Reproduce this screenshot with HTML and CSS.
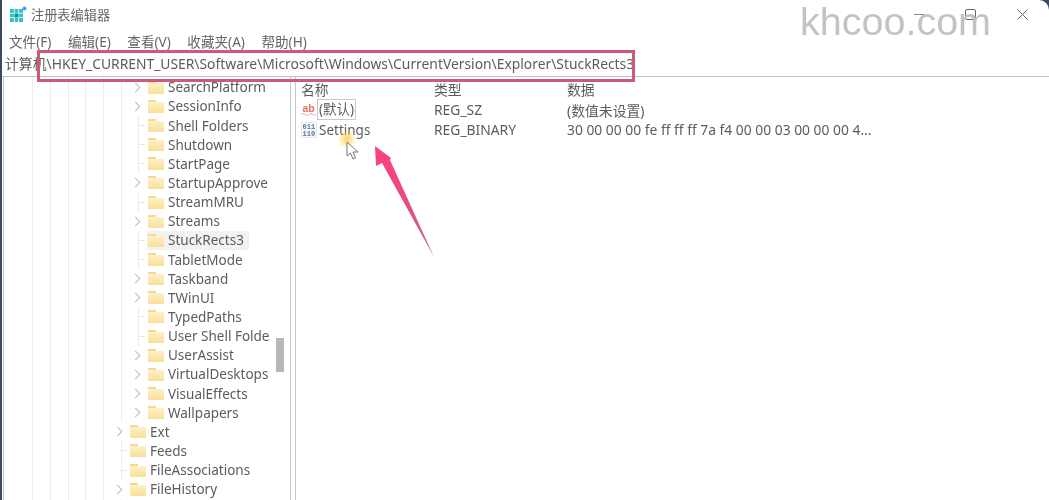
FILE: index.html
```html
<!DOCTYPE html>
<html lang="zh-CN">
<head>
    <meta charset="UTF-8">
    <title>注册表编辑器</title>
    <link rel="stylesheet" href="styles.css">
</head>
<body>
    <div class="window">
        <!-- Title bar -->
        <div class="titlebar">
            <svg class="app-icon" width="17" height="16" viewBox="0 0 17 16">
                <rect x="0" y="3" width="13" height="13" fill="#35c0c4"/>
                <path d="M0 7.3h13M0 11.6h13M4.3 3v13M8.6 3v13" stroke="#d8f4f4" stroke-width="1"/>
                <rect x="4.5" y="7.5" width="4" height="4" fill="#1f8fb0"/>
                <circle cx="14.5" cy="2.5" r="2" fill="#3f9fd8"/>
            </svg>
            <span class="app-title">注册表编辑器</span>
            <div class="controls">
                <span class="ctl-min"></span>
                <span class="ctl-max"></span>
                <svg class="ctl-close" width="11" height="11" viewBox="0 0 11 11">
                    <path d="M0.5 0.5l10 10M10.5 0.5l-10 10" stroke="#666" stroke-width="1" fill="none"/>
                </svg>
            </div>
        </div>

        <!-- Menu -->
        <div class="menubar">
            <span>文件(F)</span>
            <span>编辑(E)</span>
            <span>查看(V)</span>
            <span>收藏夹(A)</span>
            <span>帮助(H)</span>
        </div>

        <!-- Address -->
        <div class="addressbar">计算机\HKEY_CURRENT_USER\Software\Microsoft\Windows\CurrentVersion\Explorer\StuckRects3</div>

        <div class="panes">
            <!-- Key tree -->
            <div class="tree-pane">
                <div class="tree">
                    <div class="group">
                        <div class="row"><i class="chev"></i><i class="folder"></i><span>SearchPlatform</span></div>
                        <div class="row"><i class="chev"></i><i class="folder"></i><span>SessionInfo</span></div>
                        <div class="row"><i class="dash"></i><i class="folder"></i><span>Shell Folders</span></div>
                        <div class="row"><i class="dash"></i><i class="folder"></i><span>Shutdown</span></div>
                        <div class="row"><i class="dash"></i><i class="folder"></i><span>StartPage</span></div>
                        <div class="row"><i class="chev"></i><i class="folder"></i><span>StartupApprove</span></div>
                        <div class="row"><i class="dash"></i><i class="folder"></i><span>StreamMRU</span></div>
                        <div class="row"><i class="chev"></i><i class="folder"></i><span>Streams</span></div>
                        <div class="row selected"><i class="dash"></i><i class="folder"></i><span>StuckRects3</span></div>
                        <div class="row"><i class="dash"></i><i class="folder"></i><span>TabletMode</span></div>
                        <div class="row"><i class="chev"></i><i class="folder"></i><span>Taskband</span></div>
                        <div class="row"><i class="chev"></i><i class="folder"></i><span>TWinUI</span></div>
                        <div class="row"><i class="dash"></i><i class="folder"></i><span>TypedPaths</span></div>
                        <div class="row"><i class="dash"></i><i class="folder"></i><span>User Shell Folde</span></div>
                        <div class="row"><i class="chev"></i><i class="folder"></i><span>UserAssist</span></div>
                        <div class="row"><i class="chev"></i><i class="folder"></i><span>VirtualDesktops</span></div>
                        <div class="row"><i class="chev"></i><i class="folder"></i><span>VisualEffects</span></div>
                        <div class="row"><i class="chev"></i><i class="folder"></i><span>Wallpapers</span></div>
                    </div>
                    <div class="group outer">
                        <div class="row"><i class="chev"></i><i class="folder"></i><span>Ext</span></div>
                        <div class="row"><i class="dash"></i><i class="folder"></i><span>Feeds</span></div>
                        <div class="row"><i class="dash"></i><i class="folder"></i><span>FileAssociations</span></div>
                        <div class="row"><i class="chev"></i><i class="folder"></i><span>FileHistory</span></div>
                    </div>
                </div>
                <div class="scrollbar"><div class="thumb"></div></div>
            </div>

            <!-- Values -->
            <div class="list-pane">
                <div class="list-row list-head">
                    <span>名称</span><span>类型</span><span>数据</span>
                </div>
                <div class="list-row">
                    <span class="name">
                        <svg class="val-icon" width="16" height="16" viewBox="0 0 16 16">
                            <text x="1.5" y="9.5" class="ab-text">ab</text>
                            <path d="M0 12.5q2-2 4 0t4 0 4 0 3-1" stroke="#eeb5ac" fill="none"/>
                        </svg>
                        <span class="focused">(默认)</span>
                    </span>
                    <span>REG_SZ</span><span>(数值未设置)</span>
                </div>
                <div class="list-row">
                    <span class="name">
                        <svg class="val-icon" width="16" height="16" viewBox="0 0 16 16">
                            <rect x="0.5" y="0.5" width="15" height="15" fill="#f7f9fc" stroke="#e3e8ef"/>
                            <text x="1.5" y="7" class="bin-text">011</text>
                            <text x="1.5" y="14" class="bin-text">110</text>
                        </svg>
                        <span class="plain">Settings</span>
                    </span>
                    <span>REG_BINARY</span><span>30 00 00 00 fe ff ff ff 7a f4 00 00 03 00 00 00 4...</span>
                </div>
            </div>
        </div>
    </div>

    <!-- Video overlays -->
    <div class="watermark">khcoo.com</div>
    <div class="callout"></div>
    <div class="glow"></div>
    <svg class="cursor" width="16" height="20" viewBox="0 0 16 20">
        <path d="M1 1v14l3.5-3 2.5 6 2.5-1-2.5-6h5z" fill="#fff" stroke="#777" stroke-width="1"/>
    </svg>
    <svg class="arrow" width="64" height="116" viewBox="0 0 64 116">
        <defs>
            <linearGradient id="arrowFill" x1="0" y1="0" x2="0" y2="1">
                <stop offset="0.3" stop-color="#f5457c"/>
                <stop offset="1" stop-color="#c06a8a"/>
            </linearGradient>
        </defs>
        <path d="M2 1L18 13L17 15L61 112L9 18L3 21Z" fill="url(#arrowFill)"/>
    </svg>
</body>
</html>
```

FILE: styles.css
```css
html, body {
    margin: 0;
    height: 100%;
    overflow: hidden;
}

body {
    background: #3b4a5c;
    font-family: "Noto Sans", "Noto Sans CJK SC", sans-serif;
    color: #5c5c5c;
    font-size: 13.85px;
}

.window {
    margin-left: 2px;
    height: 500px;
    background: #fff;
    border-top-right-radius: 10px;
    display: flex;
    flex-direction: column;
    overflow: hidden;
    filter: blur(0.5px);
}

/* Title bar */
.titlebar {
    height: 28px;
    padding-bottom: 2px;
    display: flex;
    align-items: center;
    padding-left: 8px;
    flex: none;
}

.app-icon {
    margin-right: 4px;
}

.app-title {
    font-size: 13.2px;
    color: #666;
}

.controls {
    margin-left: auto;
    display: flex;
    align-items: center;
    gap: 41px;
    padding-right: 21px;
}

.ctl-min {
    width: 10px;
    border-top: 1px solid #888;
}

.ctl-max {
    width: 9px;
    height: 9px;
    border: 1px solid #666;
    border-radius: 2px;
}

/* Menu */
.menubar {
    height: 22px;
    display: flex;
    align-items: center;
    gap: 16.5px;
    padding-left: 7px;
    flex: none;
    color: #666;
    font-size: 13.6px;
}

.addressbar {
    height: 24px;
    line-height: 24px;
    padding-left: 3px;
    flex: none;
    border-bottom: 1px solid #c4c4c4;
    white-space: nowrap;
}

/* Panes */
.panes {
    flex: 1;
    min-height: 0;
    display: flex;
    gap: 4px;
    padding-left: 1px;
}

.tree-pane {
    width: 286px;
    border-left: 1px solid #c9c9c9;
    border-right: 1px solid #c9c9c9;
    display: flex;
    flex: none;
}

/* level guides of the tree, one per depth */
.tree {
    --guide: linear-gradient(#ececec, #ececec);
    width: 267px;
    flex: none;
    padding-top: 0.7px;
    overflow: hidden;
    background:
        var(--guide) 28px 0 / 1px 100% no-repeat,
        var(--guide) 46px 0 / 1px 100% no-repeat,
        var(--guide) 64px 0 / 1px 100% no-repeat,
        var(--guide) 81px 0 / 1px 100% no-repeat,
        var(--guide) 99px 0 / 1px 100% no-repeat,
        var(--guide) 117px 0 / 1px 100% no-repeat;
    white-space: nowrap;
    font-size: 13.5px;
}

.group {
    padding-left: 127px;
    background: linear-gradient(#ececec, #ececec) 134px 0 / 1px 100% no-repeat;
}

.group.outer {
    padding-left: 109px;
    background: none;
}

.row {
    height: 19.15px;
    display: flex;
    align-items: center;
}

.row span {
    margin-left: 4px;
    padding-right: 3px;
}

.row.selected {
    background: linear-gradient(90deg, transparent 16px, #f2f2f2 16px, #f2f2f2 118px, transparent 118px);
}

.chev, .dash {
    width: 14px;
    height: 100%;
    margin-right: 3px;
    flex: none;
    display: flex;
    align-items: center;
}

.chev {
    background: #fff;
}

.chev::before {
    content: "";
    width: 6px;
    height: 6px;
    margin-left: 1px;
    border-top: 1px solid #bbb;
    border-right: 1px solid #bbb;
    transform: rotate(45deg);
}

.dash::before {
    content: "";
    flex: 1;
    margin-left: 7px;
    border-top: 1px solid #e6e6e6;
}

.folder {
    width: 16px;
    height: 11px;
    flex: none;
    margin-top: 2px;
    border-radius: 1px;
    background: linear-gradient(180deg, #fdf1c8, #f9df98);
    position: relative;
}

.folder::before {
    content: "";
    position: absolute;
    left: 0;
    top: -2px;
    width: 8px;
    height: 2px;
    background: #f5d88e;
}

.scrollbar {
    flex: 1;
    padding: 261px 6px 0 5px;
    background: #fff;
}

.thumb {
    height: 34px;
    background: #b7b7b9;
}

/* Values list */
.list-pane {
    flex: 1;
    border-left: 1px solid #c9c9c9;
    padding-top: 2px;
    padding-left: 5px;
}

.list-row {
    display: grid;
    grid-template-columns: 133px 133px 1fr;
    height: 20.5px;
    align-items: center;
    white-space: nowrap;
}

.list-head {
    height: 20px;
}

.name {
    display: flex;
    align-items: center;
    font-size: 13.5px;
}

.val-icon {
    flex: none;
}

.ab-text {
    font: bold 10.5px "Liberation Sans", sans-serif;
    fill: #e0706a;
}

.bin-text {
    font: bold 7px "Liberation Mono", monospace;
    fill: #56779f;
}

.focused {
    border: 1px solid #c8c8c8;
    padding: 0 1px;
    line-height: 19px;
}

.plain {
    padding-left: 2px;
}

/* Overlays added by the video editor */
.watermark {
    position: absolute;
    left: 800px;
    top: -1px;
    font: 39.5px "Liberation Sans", sans-serif;
    color: #bdbdbd;
    opacity: 0.9;
}

.callout {
    position: absolute;
    left: 37px;
    top: 50px;
    width: 592px;
    height: 26px;
    border: 3px solid #cf5a78;
}

.glow {
    position: absolute;
    left: 337px;
    top: 129px;
    width: 20px;
    height: 20px;
    border-radius: 50%;
    background: radial-gradient(circle, rgba(250, 214, 90, 0.95), rgba(250, 225, 130, 0) 70%);
}

.cursor {
    position: absolute;
    left: 346px;
    top: 141px;
}

.arrow {
    position: absolute;
    left: 373px;
    top: 145px;
}
```
